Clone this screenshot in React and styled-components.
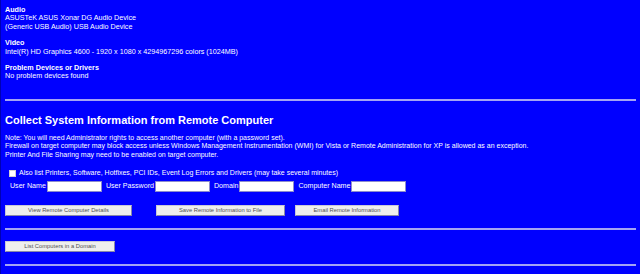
import styled, { createGlobalStyle } from 'styled-components';

const GlobalStyle = createGlobalStyle`
    html, body {
        margin: 0;
        padding: 0;
        background: #0000ff;
    }
    body {
        font-family: "Liberation Sans", Arial, sans-serif;
        color: #ffffff;
    }
`;

const Page = styled.div`
    min-height: 274px;
    box-sizing: border-box;
    border-left: 1px solid #0000b4;
    padding: 6px 4px 0 4px;
    font-size: 7.2px;
    line-height: 8.4px;
`;

const Group = styled.div`
    margin-bottom: 8px;
`;

const GroupTitle = styled.div`
    font-weight: bold;
`;

const Line = styled.div``;

const Rule = styled.div`
    height: 2px;
    background: #a4a4f4;
    margin: ${(p) => p.$margin || '0'};
`;

const Heading = styled.div`
    font-size: 11px;
    line-height: 13px;
    font-weight: bold;
    margin-bottom: 7px;
`;

const Notes = styled.div`
    line-height: 8.5px;
    font-size: 7px;
    margin-bottom: 10px;
`;

const CheckRow = styled.label`
    display: flex;
    align-items: center;
    gap: 3px;
    padding-left: 4px;
    margin-bottom: 3px;
    font-size: 7px;
`;

const Box = styled.span`
    width: 5px;
    height: 5px;
    background: #ffffff;
    border: 0.5px solid #d0d0d0;
`;

const FieldRow = styled.div`
    display: flex;
    align-items: center;
    padding-left: 5px;
    gap: 4px;
    margin-bottom: 13px;
`;

const Field = styled.div`
    display: flex;
    align-items: center;
    gap: 1px;
    font-size: 7.1px;
`;

const Input = styled.div`
    width: ${(p) => p.$w || 53}px;
    height: 9px;
    background: #ffffff;
    border: 1px solid #8c8ccc;
`;

const ButtonRow = styled.div`
    display: flex;
    align-items: center;
`;

const Button = styled.div`
    box-sizing: border-box;
    width: ${(p) => p.$w}px;
    margin-left: ${(p) => p.$ml || 0}px;
    height: 11px;
    background: #eeeeee;
    border: 1px solid #c8c8d8;
    border-right-color: #8888a8;
    border-bottom-color: #8888a8;
    color: #505050;
    font-size: 5.8px;
    line-height: 9px;
    text-align: center;
`;

export default function App() {
    return (
        <Page>
            <GlobalStyle />
            <Group>
                <GroupTitle>Audio</GroupTitle>
                <Line>ASUSTeK ASUS Xonar DG Audio Device</Line>
                <Line>(Generic USB Audio) USB Audio Device</Line>
            </Group>
            <Group>
                <GroupTitle>Video</GroupTitle>
                <Line>Intel(R) HD Graphics 4600 - 1920 x 1080 x 4294967296 colors (1024MB)</Line>
            </Group>
            <Group>
                <GroupTitle>Problem Devices or Drivers</GroupTitle>
                <Line>No problem devices found</Line>
            </Group>
            <Rule $margin="18px 0 13px 0" />
            <Heading>Collect System Information from Remote Computer</Heading>
            <Notes>
                <Line>Note: You will need Administrator rights to access another computer (with a password set).</Line>
                <Line>Firewall on target computer may block access unless Windows Management Instrumentation (WMI) for Vista or Remote Administration for XP is allowed as an exception.</Line>
                <Line>Printer And File Sharing may need to be enabled on target computer.</Line>
            </Notes>
            <CheckRow>
                <Box />
                Also list Printers, Software, Hotfixes, PCI IDs, Event Log Errors and Drivers (may take several minutes)
            </CheckRow>
            <FieldRow>
                <Field>User Name <Input /></Field>
                <Field>User Password <Input /></Field>
                <Field>Domain <Input /></Field>
                <Field>Computer Name <Input /></Field>
            </FieldRow>
            <ButtonRow>
                <Button $w={127}>View Remote Computer Details</Button>
                <Button $w={129} $ml={24}>Save Remote Information to File</Button>
                <Button $w={104} $ml={10}>Email Remote Information</Button>
            </ButtonRow>
            <Rule $margin="12px 0 11px 0" />
            <Button $w={110}>List Computers in a Domain</Button>
            <Rule $margin="12px 0 0 0" />
        </Page>
    );
}
